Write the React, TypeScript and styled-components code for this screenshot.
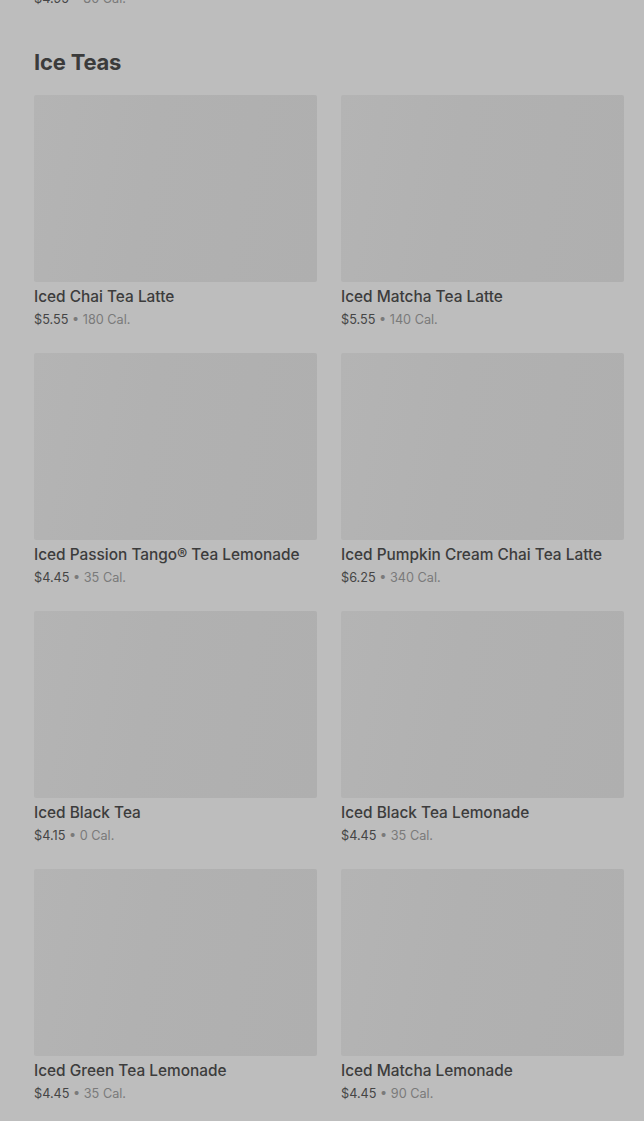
import styled, { createGlobalStyle } from "styled-components";

const GlobalStyle = createGlobalStyle`
  html, body {
    margin: 0;
    padding: 0;
    background: #bdbdbd;
    font-family: Inter, "Noto Sans", sans-serif;
    overflow: hidden;
  }
`;

const Page = styled.div`
  width: 644px;
  height: 1121px;
  overflow: hidden;
  background: #bdbdbd;
  padding: 0 20px 0 34px;
  box-sizing: border-box;
`;

const PrevLine = styled.div`
  margin-top: -11px;
  height: 20px;
  line-height: 20px;
  font-size: 12.7px;
`;

const Heading = styled.h2`
  margin: 37px 0 17px;
  font-size: 22px;
  line-height: 32px;
  font-weight: 700;
  color: #3b3b3b;
  letter-spacing: -0.2px;
`;

const Grid = styled.div`
  display: grid;
  grid-template-columns: repeat(2, 283px);
  column-gap: 24px;
  row-gap: 23px;
`;

const Card = styled.div`
  display: flex;
  flex-direction: column;
`;

const Thumb = styled.div`
  height: 187px;
  border-radius: 2px;
  background: linear-gradient(100deg, #b4b4b4 0%, #b1b1b1 40%, #afafaf 100%);
  margin-bottom: 5px;
`;

const Name = styled.div`
  font-size: 15.4px;
  line-height: 20px;
  font-weight: 500;
  color: #3c3c3c;
  white-space: nowrap;
  margin-bottom: 3px;
`;

const Meta = styled.div`
  font-size: 12.7px;
  line-height: 20px;
  white-space: nowrap;
`;

const Price = styled.span`
  color: #454545;
`;

const Cal = styled.span`
  color: #7a7a7a;
`;

const items = [
  { name: "Iced Chai Tea Latte", price: "$5.55", cal: "180 Cal." },
  { name: "Iced Matcha Tea Latte", price: "$5.55", cal: "140 Cal." },
  { name: "Iced Passion Tango® Tea Lemonade", price: "$4.45", cal: "35 Cal." },
  { name: "Iced Pumpkin Cream Chai Tea Latte", price: "$6.25", cal: "340 Cal." },
  { name: "Iced Black Tea", price: "$4.15", cal: "0 Cal." },
  { name: "Iced Black Tea Lemonade", price: "$4.45", cal: "35 Cal." },
  { name: "Iced Green Tea Lemonade", price: "$4.45", cal: "35 Cal." },
  { name: "Iced Matcha Lemonade", price: "$4.45", cal: "90 Cal." },
];

const App = () => {
  return (
    <Page>
      <GlobalStyle />
      <PrevLine>
        <Price>$4.95</Price> <Cal>• 80 Cal.</Cal>
      </PrevLine>
      <Heading>Ice Teas</Heading>
      <Grid>
        {items.map((item) => (
          <Card key={item.name}>
            <Thumb />
            <Name>{item.name}</Name>
            <Meta>
              <Price>{item.price}</Price> <Cal>• {item.cal}</Cal>
            </Meta>
          </Card>
        ))}
      </Grid>
    </Page>
  );
};

export default App;
